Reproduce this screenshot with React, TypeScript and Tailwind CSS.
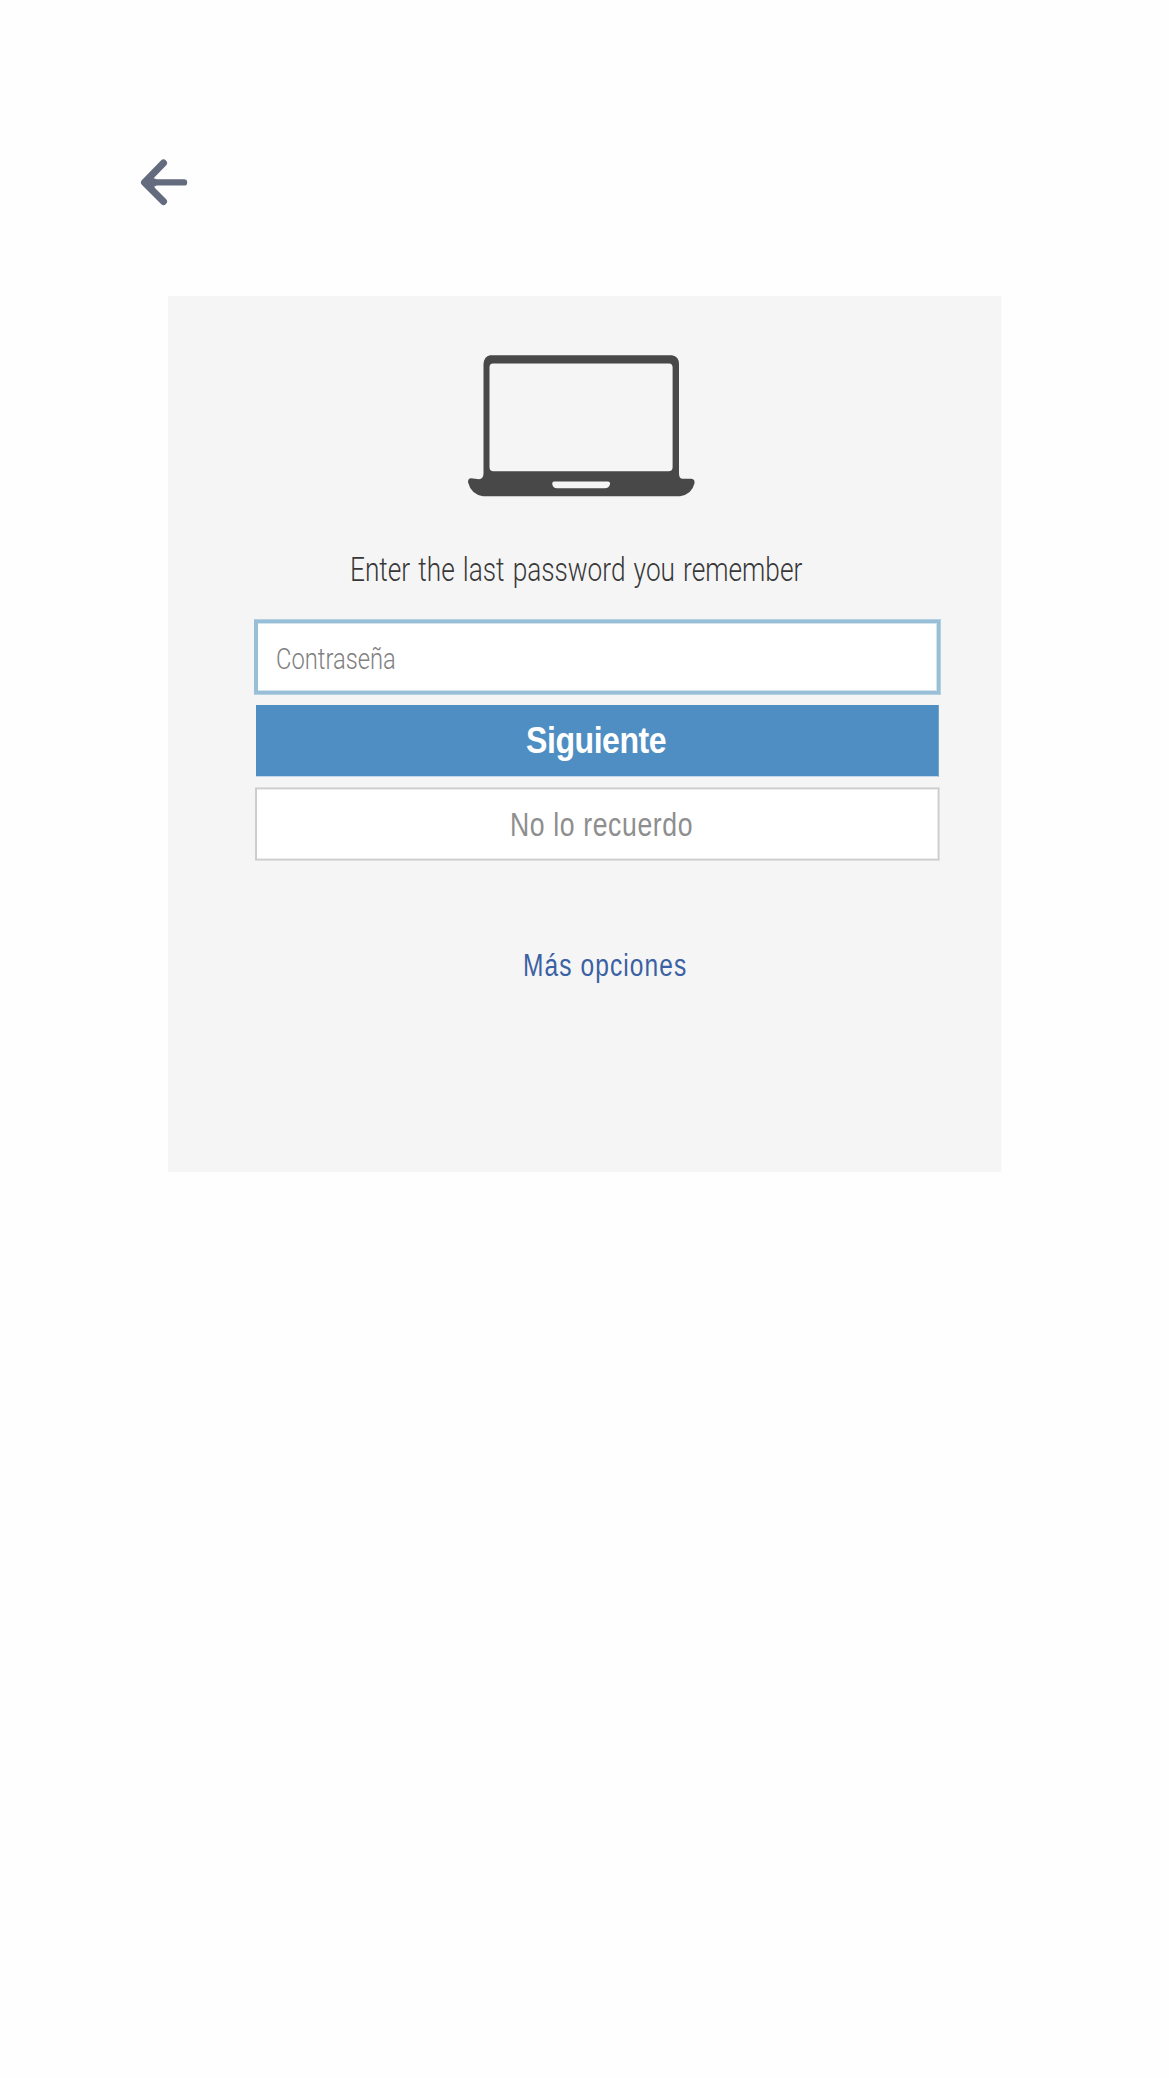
function BackArrow() {
  return (
    <svg className="block h-[90px] w-[90px]" viewBox="0 0 90 90" fill="none" stroke="#656b7e" strokeLinecap="round" strokeLinejoin="round">
      <path d="M43.5 23 L24.5 42.5 L43.5 61.5" strokeWidth="7" />
      <path d="M28 42.4 H64" strokeWidth="6.4" />
      <path d="M25 42.5 L33 36.5 Q33 39.3 36 39.3 V45.6 Q33 45.6 34.5 50 Z" fill="#656b7e" strokeWidth="0.6" />
    </svg>
  );
}

function Laptop() {
  return (
    <svg className="block h-[142px] w-[228px]" viewBox="0 -0.2 228 142" fill="#484848">
      <path
        fillRule="evenodd"
        d="M22 0 H204 Q211 1 211 9 V118 Q211 124 215.5 123.5 H223 Q227 123.500 226.500 128 Q224 139 212 141 H15 Q3 139 0 127 Q0 123 3 123 L11 124 Q15.500 123.500 15.500 118 V9 Q16 1 22 0 Z M25 8.200 Q21.500 8.200 21.500 12 V112 Q21.500 116 25.500 116 H200.500 Q204.600 116 204.600 112 V12 Q204.600 8.200 201 8.200 Z M86 126.300 H140 Q142.500 126.300 142 129 Q141 133 137 133 H89 Q85 133 84.300 129 Q84 126.300 86 126.300 Z"
      />
    </svg>
  );
}

export default function App() {
  return (
    <main className="min-h-[2078px] w-[1169px] bg-[#fefefe] font-['Roboto',sans-serif]">
      <header className="flex h-[296px] pt-[140px] pl-[120px]">
        <button aria-label="Volver" className="h-[90px] w-[90px]">
          <BackArrow />
        </button>
      </header>
      <section className="ml-[168px] flex h-[876px] w-[834px] flex-col border-r border-[#fafafa] bg-[#f5f5f5]">
        <div className="pt-[59px] pl-[300px]">
          <Laptop />
        </div>
        <h1 className="mt-[53px] h-[40px] pl-[182px] text-[33.5px] leading-[40px] font-light whitespace-nowrap text-[#383838]">
          <span className="inline-block origin-left scale-x-[0.783] [word-spacing:2.2px]">Enter the last password you remember</span>
        </h1>
        <div className="mt-[29px] ml-[86px] h-[76px] w-[687px] border-t border-r border-b border-[#b2d1e1]">
          <div className="flex h-full items-center border-3 border-l-4 border-[#98bfd7] bg-white pt-[3px] pl-[18px] shadow-[inset_-1px_1px_#d1e3ed,inset_0_-1px_#d1e3ed]">
            <span className="inline-block origin-left scale-x-[0.805] text-[29.5px] leading-[40px] font-light whitespace-nowrap text-[#808080]">Contraseña</span>
          </div>
        </div>
        <button className="mt-[10px] ml-[88px] flex h-[72px] w-[683px] items-center border-r border-b border-r-[#72a4ce] border-b-[#c6d8e8] bg-[#4f8ec2] pl-[270px]">
          <span className="inline-block origin-left scale-x-[0.89] font-['Liberation_Sans',sans-serif] text-[36px] leading-[40px] font-bold tracking-[-0.5px] whitespace-nowrap text-white">Siguiente</span>
        </button>
        <div className="mt-[10px] ml-[87px] h-[74px] w-[685px] border-t border-r border-b border-[#dfdfdf]">
          <button className="flex h-full w-full items-center border border-l-2 border-[#cdcdcd] bg-white pl-[253px] shadow-[inset_-1px_1px_#ebebeb,inset_0_-1px_#ebebeb]">
            <span className="inline-block origin-left scale-x-[0.782] font-['Liberation_Sans',sans-serif] text-[34px] leading-[40px] tracking-[0.8px] whitespace-nowrap text-[#8e8e8e]">No lo recuerdo</span>
          </button>
        </div>
        <a className="mt-[85px] block h-[40px] pl-[355px] font-['Liberation_Sans',sans-serif] text-[31px] leading-[40px] tracking-[1.4px] whitespace-nowrap text-[#3a61a3]">
          <span className="inline-block origin-left scale-x-[0.79]">Más opciones</span>
        </a>
      </section>
    </main>
  );
}
